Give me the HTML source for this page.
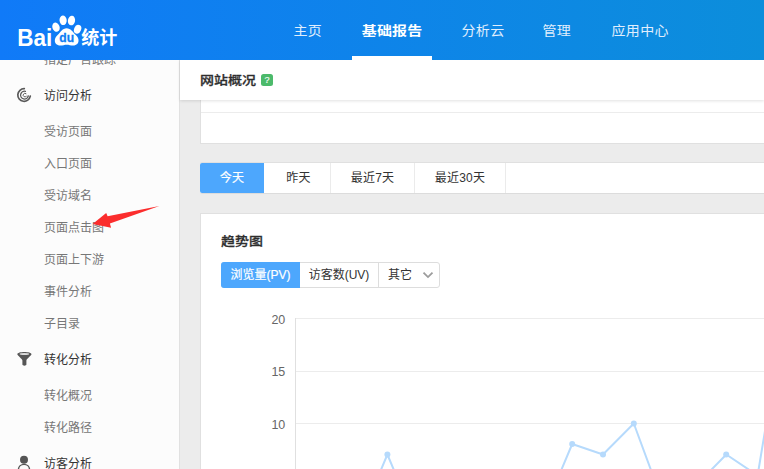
<!DOCTYPE html>
<html lang="zh-CN">
<head>
<meta charset="utf-8">
<title>百度统计 - 网站概况</title>
<style>
*{box-sizing:border-box;margin:0;padding:0}
html,body{width:764px;height:469px;overflow:hidden;background:#ececec}
body{font-family:"Liberation Sans","Noto Sans CJK SC",sans-serif;font-size:12px;color:#333;position:relative}
.abs{position:absolute}
#header{position:absolute;left:0;top:0;width:764px;height:60px;z-index:5;background:linear-gradient(90deg,#107af8 0%,#0c8edb 100%)}
#nav a{transform:scaleY(0.9);transform-origin:50% 50%;position:absolute;top:0;height:60px;line-height:60px;color:#e0eefd;font-size:14px;letter-spacing:0.4px;margin-left:-0.6px;text-decoration:none;white-space:nowrap}
#nav a.on{color:#fff;font-weight:bold;font-size:15px;transform:scaleY(0.84);letter-spacing:0.2px;margin-left:-0.3px;top:0.5px}
#nav .bar{position:absolute;left:352px;top:56px;width:80px;height:4px;background:#fff}
#side{position:absolute;left:0;top:60px;width:180px;height:409px;background:#fcfcfc;border-right:1px solid #e1e1e1}
#side .g{position:absolute;left:44px;font-size:12px;color:#333;line-height:16px;white-space:nowrap}
#side .i{position:absolute;left:44px;font-size:12px;color:#777;line-height:16px;white-space:nowrap}
#title{position:absolute;left:180px;top:60px;width:584px;height:40px;background:#fff;box-shadow:0 1px 3px rgba(0,0,0,.12);z-index:3}
#title h1{transform:scaleY(0.88);position:absolute;left:20px;top:1px;line-height:40px;font-size:14px;font-weight:500;color:#2e2e2e;-webkit-text-stroke:0.3px #2e2e2e}
#title .q{position:absolute;left:81px;top:14px;width:12px;height:12px;border-radius:2.5px;background:#4cba6b;color:#f4fbf6;font-size:9px;line-height:13px;text-align:center;font-weight:normal;-webkit-text-stroke:0.2px #f4fbf6}
#box1{position:absolute;left:200px;top:90px;width:570px;height:54px;background:#fff;border:1px solid #e0e0e0}
#box1 .ln{position:absolute;left:0;top:21px;width:570px;height:1px;background:#ececec}
#tabs{position:absolute;left:200px;top:162px;width:570px;height:32px;background:#fff;border-radius:2px 0 0 2px;border-bottom:1px solid #dcdcdc;border-top:1px solid #e0e0e0}
#tabs span{position:absolute;top:0;height:30px;line-height:30px;text-align:center;font-size:12px;letter-spacing:0.25px;color:#333;border-right:1px solid #ebebeb}
#tabs span.on{background:#4da7fd;color:#fff;-webkit-text-stroke:0.2px #fff;border-radius:2px 0 0 2px;border-right:0}
#card{position:absolute;left:200px;top:213px;width:570px;height:300px;background:#fff;border:1px solid #e0e0e0}
#card h2{transform:scaleY(0.88);position:absolute;left:20px;top:19px;font-size:14px;font-weight:500;line-height:18px;color:#2e2e2e;-webkit-text-stroke:0.3px #2e2e2e}
.btns{position:absolute;left:20px;top:48px;height:26px;width:219px;border:1px solid #ddd;border-radius:3px;background:#fff}
.btns span{position:absolute;top:-1px;height:26px;line-height:26px;font-size:12px;text-align:center;color:#333}
.btns span.on{background:#4da7fd;color:#fff;-webkit-text-stroke:0.2px #fff;border-radius:3px 0 0 3px}
#chart{position:absolute;left:0;top:0;width:764px;height:469px;z-index:2;pointer-events:none}
</style>
</head>
<body>
<div id="header">
  <div id="logo" class="abs" style="left:0;top:0;width:130px;height:60px">
    <svg width="130" height="60" viewBox="0 0 130 60" style="position:absolute;left:0;top:0">
      <g fill="#fff">
        <ellipse cx="56" cy="27.2" rx="3.6" ry="4.7" transform="rotate(-20 56 27.2)"/>
        <ellipse cx="63.1" cy="20.3" rx="3.6" ry="4.8" transform="rotate(-5 63.1 20.3)"/>
        <ellipse cx="71.5" cy="20.6" rx="3.6" ry="4.8" transform="rotate(10 71.5 20.6)"/>
        <ellipse cx="77.6" cy="29.2" rx="3.5" ry="4.6" transform="rotate(22 77.6 29.2)"/>
        <path d="M66.6 28.2 C62.6 28.2 60.6 32 57.6 35 C53.4 38.6 54 44.6 59 45.4 C62 45.8 64.2 44.7 66.7 44.7 C69.2 44.7 71.4 45.8 74.4 45.4 C79.4 44.6 80 38.6 75.8 35 C72.8 32 70.6 28.2 66.6 28.2 Z"/>
      </g>
      <text transform="translate(17.2 45.6) scale(0.98 1)" font-family="Liberation Sans, sans-serif" font-weight="bold" font-size="23" fill="#fff">Bai</text>
      <text transform="translate(59.3 42.4) scale(0.93 1)" font-family="Liberation Sans, sans-serif" font-weight="bold" font-size="13" fill="#107df3" stroke="#107df3" stroke-width="0.3">du</text>
      <text x="81.3" y="43.6" font-family="Liberation Sans, Noto Sans CJK SC, sans-serif" font-weight="bold" font-size="18" fill="#fff">统计</text>
    </svg>
  </div>
  <div id="nav">
    <a style="left:294px">主页</a>
    <a class="on" style="left:362px">基础报告</a>
    <a style="left:462px">分析云</a>
    <a style="left:543px">管理</a>
    <a style="left:612px">应用中心</a>
    <div class="bar"></div>
  </div>
</div>
<div id="side">
  <svg class="abs" style="left:0;top:0" width="60" height="409" viewBox="0 60 60 409">
    <g fill="none" stroke="#5a5a5a" stroke-linecap="round">
      <path d="M24.3 88.7 A6.3 6.3 0 1 0 30.3 96.2" stroke-width="1.7"/>
      <path d="M25.4 91.3 A3.9 3.9 0 1 0 28.3 96" stroke-width="1.3"/>
      <path d="M26 93.6 A1.8 1.8 0 1 0 26.6 96" stroke-width="1"/>
    </g>
    <path d="M17.3 354.2 C17.3 351.2 31.5 351.2 31.5 354.2 C31.5 355.4 26.4 359 26.4 360.4 L26.4 364.6 C26.4 366.1 22.4 366.1 22.4 364.6 L22.4 360.4 C22.4 359 17.3 355.4 17.3 354.2 Z" fill="#565656"/>
    <ellipse cx="24.4" cy="354" rx="4.8" ry="1" fill="#dcdcdc"/>
    <circle cx="24" cy="459.8" r="4" fill="#555"/>
    <path d="M18.4 470 C18.4 462.5 29.6 462.5 29.6 470" fill="none" stroke="#555" stroke-width="1.4"/>
  </svg>
    <div class="i" style="top:-8px;left:44px">指定广告跟踪</div>
  <div class="g" style="top:28px">访问分析</div>
  <div class="i" style="top:64px">受访页面</div>
  <div class="i" style="top:96px">入口页面</div>
  <div class="i" style="top:128px">受访域名</div>
  <div class="i" style="top:160px">页面点击图</div>
  <div class="i" style="top:192px">页面上下游</div>
  <div class="i" style="top:224px">事件分析</div>
  <div class="i" style="top:256px">子目录</div>
  <div class="g" style="top:292px">转化分析</div>
  <div class="i" style="top:328px">转化概况</div>
  <div class="i" style="top:360px">转化路径</div>
  <div class="g" style="top:396px">访客分析</div>
</div>
<div id="title"><h1>网站概况</h1><div class="q">?</div></div>
<div id="box1"><div class="ln"></div></div>
<div id="tabs">
  <span class="on" style="left:0;width:64px">今天</span>
  <span style="left:64px;width:67px;padding-left:3px">昨天</span>
  <span style="left:131px;width:84px">最近7天</span>
  <span style="left:215px;width:91px">最近30天</span>
</div>
<div id="card">
  <h2>趋势图</h2>
  <div class="btns">
    <span class="on" style="left:-1px;width:79px">浏览量(PV)</span>
    <span style="left:78px;width:79px;border-right:1px solid #ddd">访客数(UV)</span>
    <span style="left:157px;width:61px;text-align:left;padding-left:9px">其它</span>
  </div>
</div>
<svg id="chart" viewBox="0 0 764 469" width="764" height="469">
  <g stroke="#ececec" stroke-width="1" shape-rendering="crispEdges">
    <line x1="295" y1="318.5" x2="764" y2="318.5"/>
    <line x1="295" y1="371.5" x2="764" y2="371.5"/>
    <line x1="295" y1="423.5" x2="764" y2="423.5"/>
    <line x1="295.5" y1="318" x2="295.5" y2="469" stroke="#e0e0e0"/>
  </g>
  <g font-family="Liberation Sans, sans-serif" font-size="13" fill="#666" text-anchor="end">
    <text transform="translate(285.3 323.6) scale(0.96 1)">20</text>
    <text transform="translate(285.3 376.1) scale(0.96 1)">15</text>
    <text transform="translate(285.3 428.6) scale(0.96 1)">10</text>
  </g>
  <polyline fill="none" stroke="#b6dafc" stroke-width="2" stroke-linejoin="round" points="356.6,528 387.4,454.5 418.2,528 541.4,517.5 572.2,444 603,454.5 633.8,423.5 664.6,507 695.4,486 726.3,454.5 757.6,475.5 788.4,290"/>
  <g fill="#b6dafc">
    <circle cx="387.4" cy="454.5" r="3"/><circle cx="572.2" cy="444" r="3"/><circle cx="603" cy="454.5" r="3"/><circle cx="633.8" cy="423.5" r="3"/><circle cx="726.2" cy="454.5" r="3"/>
  </g>
  <path d="M423.5 272.6 l4.5 4.5 l4.5 -4.5" fill="none" stroke="#9c9c9c" stroke-width="1.8"/>
  <polygon points="159.4,206 107.6,216.3 106.2,213 92.6,224.1 111.1,227.8 109.9,223.5" fill="#fb2d2d"/>
</svg>
</body>
</html>
